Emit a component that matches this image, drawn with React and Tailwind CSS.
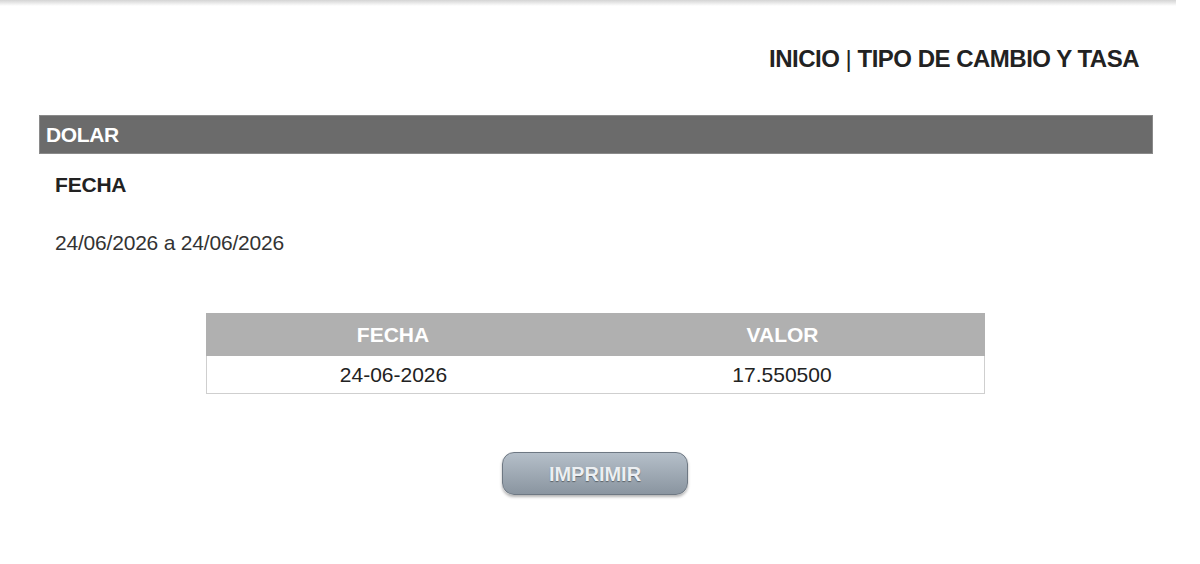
import React from "react";

export default function App() {
  return (
    <div className="relative w-[1200px] h-[564px] bg-white overflow-hidden" style={{ fontFamily: '"Liberation Sans", Arial, sans-serif' }}>
      <div className="absolute left-0 top-0 w-[1176px] h-[6px] bg-gradient-to-b from-[#d4d4d4] to-white"></div>
      <div className="flex justify-end pt-[44px] pr-[61px]">
        <h1 className="text-[24px] leading-[30px] font-bold text-[#222] tracking-[-0.5px]">
          INICIO <span className="font-normal">|</span> TIPO DE CAMBIO Y TASA
        </h1>
      </div>
      <div className="ml-[39px] mr-[47px] mt-[41px] h-[39px] bg-[#6b6b6b] flex items-center pl-[6px] border border-[#8a8a8a]">
        <span className="text-white font-bold text-[21px] tracking-[-0.4px]">DOLAR</span>
      </div>
      <div className="pl-[55px] pt-[19px]">
        <div className="text-[21px] font-bold text-[#222] leading-[24px] tracking-[-0.2px]">FECHA</div>
        <div className="text-[21px] text-[#333] leading-[24px] mt-[34px] tracking-[-0.2px]">24/06/2026 a 24/06/2026</div>
      </div>
      <div className="ml-[206px] mt-[58px] w-[779px]">
        <div className="flex h-[43px] bg-[#b0b0b0] text-white font-bold text-[21px] items-center">
          <div className="w-[374px] text-center">FECHA</div>
          <div className="flex-1 text-center">VALOR</div>
        </div>
        <div className="flex h-[38px] border border-t-0 border-[#cfcfcf] text-[21px] text-[#222] items-center">
          <div className="w-[373px] text-center">24-06-2026</div>
          <div className="flex-1 text-center">17.550500</div>
        </div>
      </div>
      <div className="flex justify-center mt-[58px] pr-[10px]">
        <button className="w-[186px] h-[43px] rounded-[12px] border border-[#6e7883] bg-gradient-to-b from-[#b5bfc9] to-[#8a95a0] shadow-[0_2px_3px_rgba(0,0,0,0.3)] text-[#eceff2] font-bold text-[20px] [text-shadow:0_1px_1px_rgba(0,0,0,0.4)]">
          IMPRIMIR
        </button>
      </div>
    </div>
  );
}
